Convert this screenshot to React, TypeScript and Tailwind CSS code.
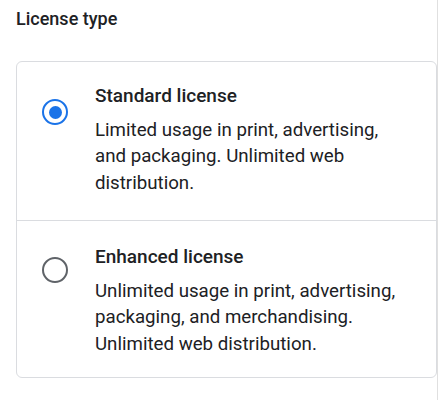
import { useState } from 'react'

type License = {
  id: string
  title: string
  description: string
}

const LICENSES: License[] = [
  {
    id: 'standard',
    title: 'Standard license',
    description: 'Limited usage in print, advertising, and packaging. Unlimited web distribution.',
  },
  {
    id: 'enhanced',
    title: 'Enhanced license',
    description: 'Unlimited usage in print, advertising, packaging, and merchandising. Unlimited web distribution.',
  },
]

function Radio({ checked }: { checked: boolean }) {
  return (
    <span
      className={
        checked
          ? 'w-[26px] h-[26px] rounded-full border-[2.5px] border-[#1a73e8] flex items-center justify-center'
          : 'w-[26px] h-[26px] rounded-full border-[2.5px] border-[#5f6368] flex items-center justify-center'
      }
    >
      {checked && <span className="w-[13px] h-[13px] rounded-full bg-[#1a73e8]" />}
    </span>
  )
}

export default function App() {
  const [selected, setSelected] = useState('standard')

  return (
    <div
      className="w-[438px] min-h-[400px] bg-white border-r border-[#e0e0e0] pl-4 pt-[7px]"
      style={{ fontFamily: 'Roboto, "Noto Sans", sans-serif' }}
    >
      <h2 className="text-[18px] leading-6 font-medium text-[#202124]">License type</h2>

      <div className="mt-[30px] w-[421px] rounded-md border border-[#dadce0] bg-white">
        {LICENSES.map((l, i) => (
          <label
            key={l.id}
            className={
              i > 0
                ? 'flex items-start gap-[27px] pl-[25px] pr-[24px] pt-[24px] h-[157px] border-t border-[#dadce0] cursor-pointer'
                : 'flex items-start gap-[27px] pl-[25px] pr-[24px] pt-[22px] h-[158px] cursor-pointer'
            }
            onClick={() => setSelected(l.id)}
          >
            <span className={i > 0 ? 'mt-[12px] shrink-0' : 'mt-[15px] shrink-0'}>
              <Radio checked={selected === l.id} />
            </span>
            <span className="flex flex-col">
              <span className="text-[19px] leading-6 font-medium text-[#202124]">{l.title}</span>
              <span className="mt-[8.5px] text-[18.7px] leading-[26.7px] text-[#202124]">{l.description}</span>
            </span>
          </label>
        ))}
      </div>
    </div>
  )
}
